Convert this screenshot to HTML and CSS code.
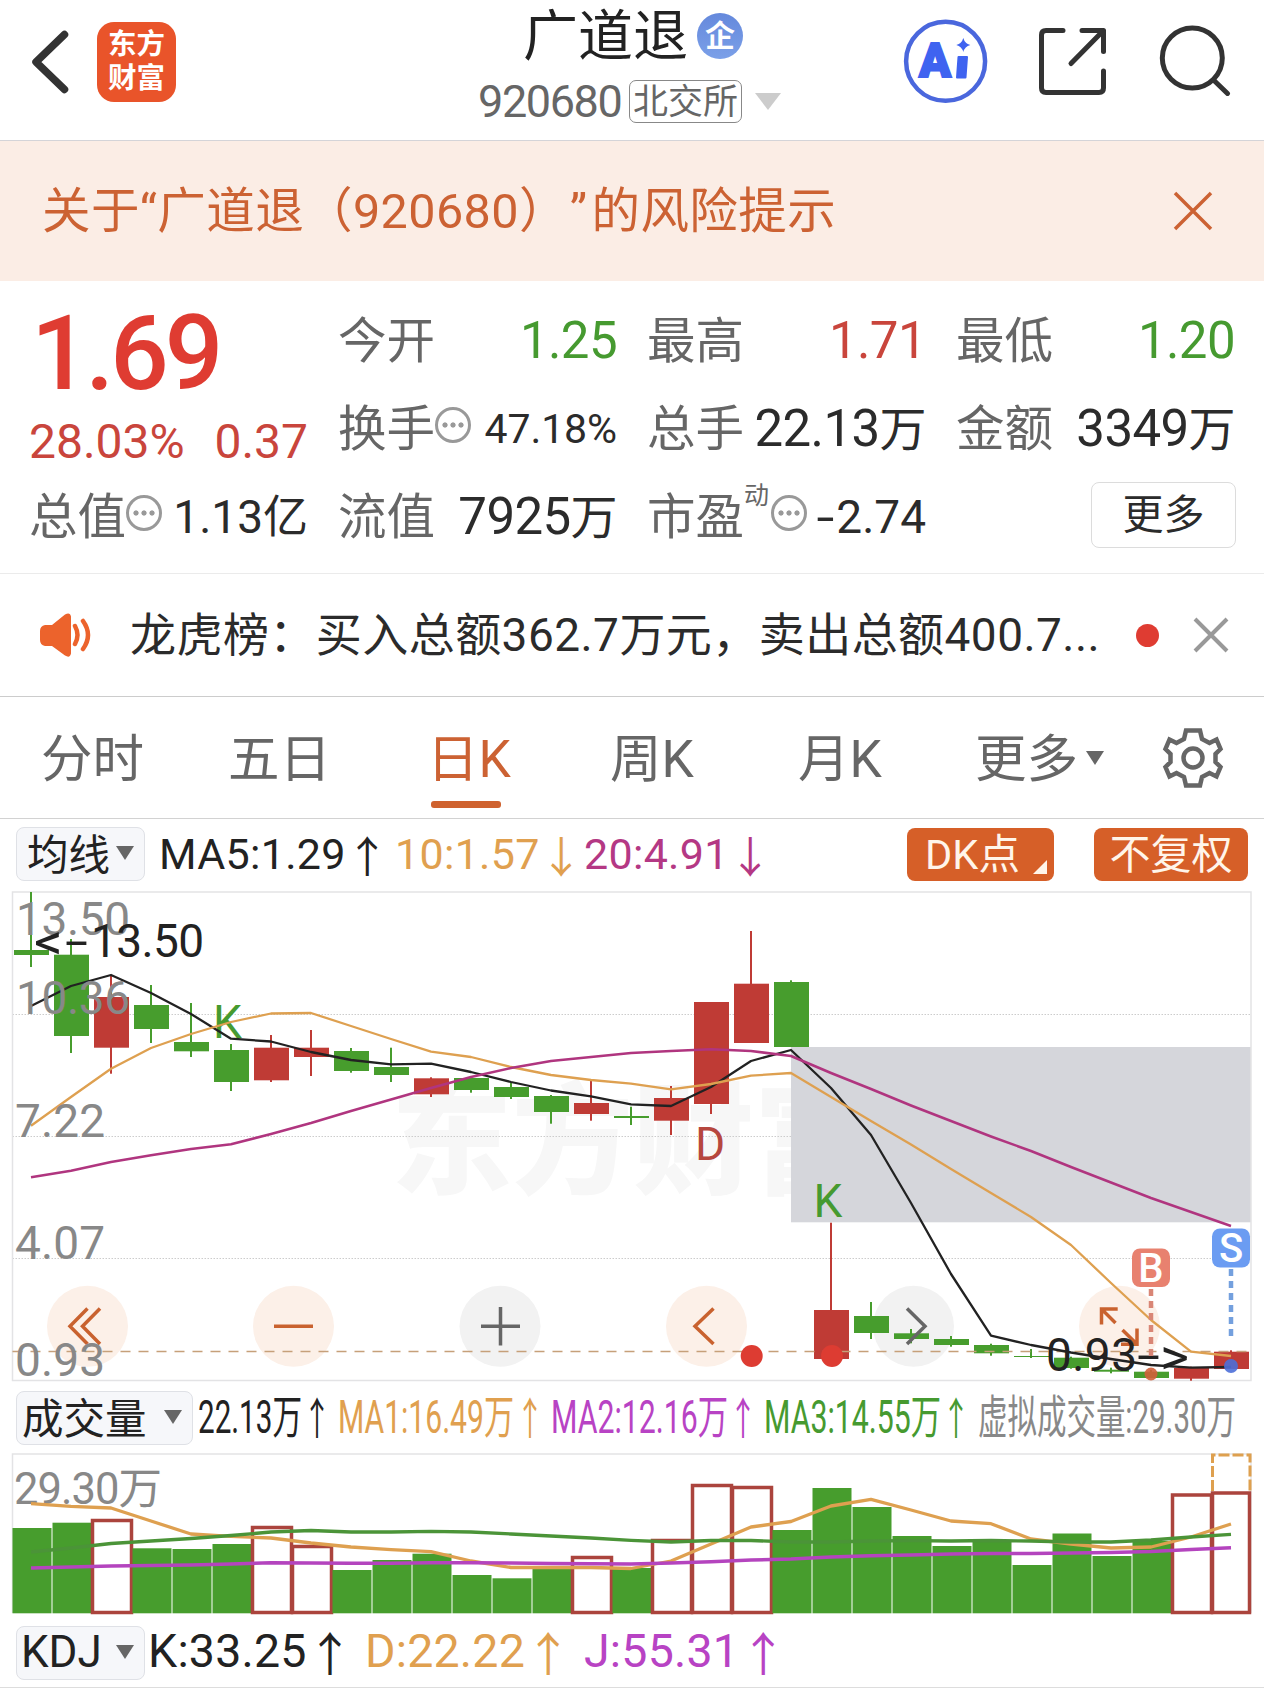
FILE: index.html
```
<!DOCTYPE html>
<html lang="zh-CN">
<head>
    <meta charset="UTF-8">
    <meta name="viewport" content="width=device-width, initial-scale=1.0">
    <title>广道退 920680</title>
    <link rel="stylesheet" href="styles.css">
</head>
<body>

<!-- Top bar -->
<header class="topbar">
    <svg class="back" width="44" height="70" viewBox="28 27 44 70"><path d="M64.500 34.500L36 62l28.500 27.500" /></svg>
    <div class="logo">东方<br>财富</div>
    <div class="stock">
        <div class="stock-name">广道退<span class="badge">企</span></div>
        <div class="stock-code"><span class="code">920680</span><span class="market">北交所</span><i class="tri tri-light"></i></div>
    </div>
    <div class="actions">
        <svg width="86" height="86" viewBox="903 18 86 86">
            <circle cx="945.6" cy="61.300" r="39.500" fill="none" stroke="#4a67dd" stroke-width="4.500" />
            <text x="919" y="76.500" textLength="32" lengthAdjust="spacingAndGlyphs" class="ai-a">A</text>
            <path d="M958.500 57h8.500l-1.500 20.500h-8.500z" fill="#3f63f0" stroke="#3f63f0" stroke-width="2" stroke-linejoin="round" />
            <path d="M963.300 38q1.500 5.500 7 7q-5.500 1.500-7 7q-1.500-5.500-7-7q5.500-1.500 7-7z" fill="#3f63f0" />
        </svg>
        <svg class="share" width="70" height="70" viewBox="1037 26 70 70">
            <path d="M1063 30.500h-17q-4.500 0-4.500 4.500v53q0 4.500 4.500 4.500h53q4.500 0 4.500-4.500v-17M1082 30.500h21.500v21M1102 32L1071 63.500" />
        </svg>
        <svg class="search" width="74" height="74" viewBox="1157 22 74 74">
            <circle cx="1192.300" cy="58" r="30" />
            <path d="M1213.500 80l14 13.500" />
        </svg>
    </div>
</header>

<!-- Risk notice -->
<div class="notice">
    <span class="notice-text">关于“广道退（920680）<q>”</q>的风险提示</span>
    <svg width="40" height="40" viewBox="0 0 40 40"><path d="M2 2L38 38M38 2L2 38" /></svg>
</div>

<!-- Quote panel -->
<section class="quote">
    <div class="price-box">
        <div class="price">1.69</div>
        <div class="change"><span>28.03%</span><span>0.37</span></div>
    </div>
    <div class="cell"><label>今开</label><b class="green">1.25</b></div>
    <div class="cell"><label>最高</label><b class="red">1.71</b></div>
    <div class="cell"><label>最低</label><b class="green">1.20</b></div>
    <div class="cell"><label>换手</label><i class="more-dot"></i><b class="small">47.18%</b></div>
    <div class="cell"><label>总手</label><b>22.13<em>万</em></b></div>
    <div class="cell"><label>金额</label><b>3349<em>万</em></b></div>
    <div class="cell"><label>总值</label><i class="more-dot"></i><b class="mid">1.13<em>亿</em></b></div>
    <div class="cell"><label>流值</label><b>7925<em>万</em></b></div>
    <div class="cell"><label>市盈</label><sup>动</sup><i class="more-dot"></i><b class="mid"><s>-</s>2.74</b></div>
    <div class="cell cell-end"><span class="more-btn">更多</span></div>
</section>

<!-- News ticker -->
<div class="ticker">
    <svg width="54" height="46" viewBox="0 0 54 46">
        <path d="M6 13h7L26 2.500q5-3 6 2v37q-1 5-6 2L13 34H6q-5-1-5-6v-9q0-5 5-6z" fill="#ec632c" />
        <path d="M36 14q5 9 0 18M44 9q10 14 0 28" fill="none" stroke="#ec632c" stroke-width="4.500" stroke-linecap="round" />
    </svg>
    <span class="ticker-text">龙虎榜：买入总额362.7万元，卖出总额400.7...</span>
    <i class="dot"></i>
    <svg class="ticker-close" width="36" height="36" viewBox="0 0 36 36"><path d="M2 2L34 34M34 2L2 34" /></svg>
</div>

<!-- Period tabs -->
<nav class="tabs">
    <span class="tab t1">分时</span>
    <span class="tab t2">五日</span>
    <span class="tab t3 active">日K</span>
    <span class="tab t4">周K</span>
    <span class="tab t5">月K</span>
    <span class="tab t6">更多<i class="tri"></i></span>
    <svg class="gear" width="62" height="62" viewBox="-31 -31 62 62">
        <path d="M-7 -27.500H7L9 -19L16.500 -15L23.500 -18.500L27.500 -9L22.500 -4V4L27.500 9L23.500 18.500L16.500 15L9 19L7 27.500H-7L-9 19L-16.500 15L-23.500 18.500L-27.500 9L-22.500 4V-4L-27.500 -9L-23.500 -18.500L-16.500 -15L-9 -19Z" />
        <circle r="9.500" />
    </svg>
</nav>

<!-- Moving average legend -->
<div class="legend legend-ma">
    <span class="select"><span>均线</span><i class="tri"></i></span>
    <span class="val">MA5:1.29<u>↑</u></span>
    <span class="val orange">10:1.57<u>↓</u></span>
    <span class="val magenta">20:4.91<u>↓</u></span>
    <span class="tag tag-dk">DK点<i class="corner"></i></span>
    <span class="tag">不复权</span>
</div>

<!-- Daily K chart -->
<svg class="chart" width="1264" height="496" viewBox="0 9 1264 496">
    <g class="watermark">
        <text x="391" y="304" textLength="484">东方财富</text>
    </g>
    <rect x="791" y="167" width="460" height="175.300" fill="#d5d6db" />
    <path class="grid" d="M12.500 134.500H1251M12.500 256.500H791M12.500 378.500H1251" />
    <path class="frame" d="M12.500 12V500.500H1251V12Z" />
    <g class="round">
        <circle cx="87.500" cy="446.300" r="40.500" />
        <circle cx="293.500" cy="446.300" r="40.500" />
        <circle class="off" cx="500" cy="446.300" r="40.500" />
        <circle cx="706.500" cy="446.300" r="40.500" />
        <circle class="off" cx="913.500" cy="446.300" r="40.500" />
        <circle cx="1119.500" cy="446.300" r="40.500" />
    </g>
    <g id="candles"></g>
    <path class="last-price" d="M12.500 471.500H1251" />
    <g class="mark">
        <text x="213" y="158.300" class="g">K</text>
        <text x="695" y="280" class="r">D</text>
        <text x="813.500" y="337.300" class="g">K</text>
    </g>
    <g id="maLines"></g>
    <g class="ctrl">
        <path d="M87.500 428.500L70 446.300L87.500 464M100 428.500L82.500 446.300L100 464" />
        <path d="M274 446.300H313" />
        <path class="off" d="M481 446.300H520M500.500 427V465.500" />
        <path d="M713.500 428.500L695 446.300L713.500 464" />
        <path class="off" d="M907 428.500L925 446.300L907 464" />
        <path d="M1117.700 429H1101.500V444.500M1102 429.500L1115.500 443M1121 464.300H1137V448.500M1136.500 463.800L1122.500 450" />
    </g>
    <circle cx="751.700" cy="476" r="11" fill="#dd3c32" />
    <circle cx="832" cy="476" r="11" fill="#dd3c32" />
    <g class="axis">
        <text x="16" y="55" textLength="114">13.50</text>
        <text x="16" y="133.700" textLength="114">10.36</text>
        <text x="15" y="256.500" textLength="90">7.22</text>
        <text x="15" y="378.500" textLength="90">4.07</text>
        <text x="15" y="496" textLength="90">0.93</text>
    </g>
    <g class="peak">
        <text x="34" y="79" textLength="29" lengthAdjust="spacingAndGlyphs" class="wide-sign">&lt;</text>
        <text x="65" y="76.500" textLength="23" lengthAdjust="spacingAndGlyphs">-</text>
        <text x="91" y="76.500" textLength="113">13.50</text>
        <text x="1046" y="490.700" textLength="91">0.93</text>
        <text x="1137" y="490.700" textLength="23" lengthAdjust="spacingAndGlyphs">-</text>
        <text x="1160" y="493.500" textLength="29" lengthAdjust="spacingAndGlyphs" class="wide-sign">&gt;</text>
    </g>
    <!-- buy / sell flags -->
    <path d="M1151 409V476" stroke="#d98676" stroke-width="4.500" stroke-dasharray="7 5" />
    <circle cx="1151" cy="494" r="6.500" fill="#d2603a" opacity=".9" />
    <rect x="1132" y="368.500" width="38" height="38.500" rx="8" fill="#e8816f" />
    <text x="1151" y="402" class="flag">B</text>
    <path d="M1231 389V456" stroke="#74a0de" stroke-width="4.500" stroke-dasharray="7 5" />
    <circle cx="1231" cy="486" r="7" fill="#4c6fd8" opacity=".9" />
    <rect x="1212" y="348.500" width="38" height="39" rx="8" fill="#6b9cf2" />
    <text x="1231" y="382" class="flag">S</text>
</svg>

<!-- Volume legend -->
<div class="legend legend-vol">
    <span class="select wide"><span>成交量</span><i class="tri"></i></span>
    <svg width="1064" height="66" viewBox="194 1385 1064 66">
        <g fill="#222">
            <text x="198" y="1432.700" textLength="104" lengthAdjust="spacingAndGlyphs">22.13万</text>
            <text x="303" y="1435" textLength="28" lengthAdjust="spacingAndGlyphs" class="arrow">↑</text>
        </g>
        <g fill="#e0a04f">
            <text x="338" y="1432.700" textLength="176" lengthAdjust="spacingAndGlyphs">MA1:16.49万</text>
            <text x="516" y="1435" textLength="28" lengthAdjust="spacingAndGlyphs" class="arrow">↑</text>
        </g>
        <g fill="#b843c4">
            <text x="551" y="1432.700" textLength="177" lengthAdjust="spacingAndGlyphs">MA2:12.16万</text>
            <text x="729" y="1435" textLength="28" lengthAdjust="spacingAndGlyphs" class="arrow">↑</text>
        </g>
        <g fill="#469a30">
            <text x="764" y="1432.700" textLength="177" lengthAdjust="spacingAndGlyphs">MA3:14.55万</text>
            <text x="942" y="1435" textLength="28" lengthAdjust="spacingAndGlyphs" class="arrow">↑</text>
        </g>
        <text x="978" y="1432.700" textLength="258" lengthAdjust="spacingAndGlyphs" fill="#888">虚拟成交量:29.30万</text>
    </svg>
</div>

<!-- Volume chart -->
<svg class="chart" width="1264" height="167" viewBox="0 71 1264 167">
    <path class="frame" d="M12.500 233V74H1251V233" />
    <text x="14" y="124" textLength="148" class="vol-max">29.30万</text>
    <g id="bars"></g>
    <path d="M1212.500 111V75H1250V111" fill="none" stroke="#dea04f" stroke-width="3" stroke-dasharray="11 3" />
    <g id="volLines"></g>
</svg>

<!-- KDJ legend -->
<div class="legend legend-kdj">
    <span class="select"><span>KDJ</span><i class="tri"></i></span>
    <span class="val">K:33.25<u>↑</u></span>
    <span class="val orange">D:22.22<u>↑</u></span>
    <span class="val purple">J:55.31<u>↑</u></span>
</div>

<script src="script.js"></script>
</body>
</html>
```
FILE: styles.css
```
* {
    box-sizing: border-box;
}

body {
    margin: 0;
    width: 1264px;
    height: 1688px;
    overflow: hidden;
    background: #fff;
    color: #222;
    font-family: Roboto, "Noto Sans CJK SC", sans-serif;
    text-spacing-trim: space-all;
}

i, em {
    font-style: normal;
}

svg {
    display: block;
    flex: none;
}

.green { color: #469a30; }
.red { color: #c9453c; }
.orange { color: #e0a04f; }
.magenta { color: #b43884; }
.purple { color: #b843c4; }

.tri {
    display: inline-block;
    border: 9px solid transparent;
    border-top: 14px solid #666;
    border-bottom: 0;
}

.tri-light {
    border-width: 17px 13px 0;
    border-top-color: #ccc;
}

/* Top bar */
.topbar {
    display: flex;
    height: 141px;
    padding: 0 33px 0 28px;
    border-bottom: 1px solid #d4d4d8;
}

.back {
    margin-top: 27px;
    fill: none;
    stroke: #333;
    stroke-width: 7.5;
    stroke-linecap: round;
    stroke-linejoin: round;
}

.logo {
    width: 79px;
    height: 80px;
    margin: 22px 0 0 25px;
    padding-top: 6px;
    border-radius: 17px;
    background: #e9542a;
    color: #fff;
    font-size: 28.5px;
    font-weight: 700;
    line-height: 34px;
    text-align: center;
}

.stock {
    width: 310px;
    margin-left: 301px;
}

.stock-name {
    display: flex;
    align-items: center;
    height: 72px;
    padding-left: 46px;
    font-size: 55px;
    line-height: 72px;
}

.badge {
    width: 46px;
    height: 46px;
    margin-left: 9px;
    border-radius: 50%;
    background: linear-gradient(#6589dc, #7ba0e8);
    color: #fff;
    font-size: 30px;
    font-weight: 700;
    line-height: 45px;
    text-align: center;
}

.stock-code {
    display: flex;
    align-items: center;
    height: 58px;
    color: #666;
}

.code {
    width: 152px;
    padding-left: 1px;
    font-size: 45px;
    letter-spacing: -1.4px;
}

.market {
    width: 113px;
    height: 43px;
    margin-right: 13px;
    border: 1.5px solid #888;
    border-radius: 7px;
    font-size: 35px;
    line-height: 43px;
    text-align: center;
}

.actions {
    display: flex;
    align-items: flex-start;
    margin: 18px 0 0 auto;
    gap: 50px;
}

.ai-a {
    fill: #3f63f0;
    stroke: #3f63f0;
    stroke-width: 2;
    font: 900 48px Roboto, sans-serif;
}

.share, .search {
    fill: none;
    stroke: #333;
    stroke-width: 5;
    stroke-linecap: round;
    stroke-linejoin: round;
}

.share { margin-top: 8px; margin-left: -2px; }
.search { margin-top: 4px; }

/* Risk notice */
.notice {
    display: flex;
    align-items: center;
    justify-content: space-between;
    height: 140px;
    padding: 0 51px 0 42px;
    background: #fbede5;
    color: #cc6233;
}

.notice-text {
    margin-top: -9px;
    font-size: 48.5px;
    letter-spacing: .4px;
    white-space: nowrap;
}

.notice q {
    quotes: none;
    margin-left: 2px;
    margin-right: 4px;
}

.notice svg {
    stroke: #cc6233;
    stroke-width: 3.5;
}

/* Quote panel */
.quote {
    display: grid;
    grid-template-columns: repeat(4, 279px);
    grid-template-rows: repeat(3, 88px);
    column-gap: 30px;
    height: 293px;
    padding: 14px 0 0 29px;
    border-bottom: 1.5px solid #ebebeb;
}

.price-box {
    grid-row: span 2;
    color: #c9453c;
}

.price {
    height: 114px;
    padding-left: 2px;
    color: #df3c32;
    font-size: 103px;
    font-weight: 500;
    line-height: 118px;
    letter-spacing: -4px;
}

.change {
    display: flex;
    justify-content: space-between;
    font-size: 48px;
    line-height: 66px;
}

.cell {
    position: relative;
    display: flex;
    align-items: center;
    color: #2b2b2b;
    line-height: 88px;
}

.cell label {
    padding-top: 6px;
    color: #666;
    font-size: 48.500px;
}

.cell b {
    margin-left: auto;
    padding-top: 4px;
    font-size: 51px;
    font-weight: 400;
    letter-spacing: -.6px;
    white-space: nowrap;
}

.cell b em {
    font-size: 47px;
}

.cell .small {
    font-size: 41px;
    letter-spacing: -.1px;
}

.cell .mid {
    font-size: 46px;
    letter-spacing: 0;
}

.cell .mid em {
    font-size: 45px;
}

/* minus sign is wider than the font's hyphen */
.cell s {
    display: inline-block;
    margin-right: 5px;
    text-decoration: none;
    transform: scaleX(1.4);
}

.cell sup {
    align-self: flex-start;
    margin: 10px 2px 0 0;
    color: #666;
    font-size: 25px;
    line-height: 30px;
}

.more-dot {
    width: 36px;
    height: 36px;
    margin-top: -4px;
    border: 3px solid #999;
    border-radius: 50%;
    background:
        radial-gradient(circle at 7px 50%, #999 2.200px, transparent 3px),
        radial-gradient(circle at 15px 50%, #999 2.200px, transparent 3px),
        radial-gradient(circle at 23px 50%, #999 2.200px, transparent 3px);
}

.cell-end {
    justify-content: flex-end;
}

.more-btn {
    width: 145px;
    height: 66px;
    margin: -1px -1px 0 0;
    border: 1.5px solid #dcdcdc;
    border-radius: 8px;
    font-size: 41px;
    line-height: 65px;
    text-align: center;
}

/* News ticker */
.ticker {
    display: flex;
    align-items: center;
    height: 123px;
    padding-left: 39px;
    border-bottom: 1px solid #ccc;
}

.ticker-text {
    width: 990px;
    margin: -8px 0 0 37px;
    color: #2b2b2b;
    font-size: 46px;
    letter-spacing: .45px;
    white-space: nowrap;
}

.dot {
    width: 23px;
    height: 23px;
    margin-left: 16px;
    border-radius: 50%;
    background: #df3c32;
}

.ticker-close {
    margin-left: 34px;
    stroke: #999;
    stroke-width: 4;
}

/* Period tabs */
.tabs {
    display: flex;
    align-items: center;
    height: 122px;
    padding-left: 41px;
    border-bottom: 1px solid #d2d2d2;
    color: #666;
    font-size: 51.5px;
    white-space: nowrap;
}

.tab { margin-top: -6px; }
.t1 { width: 187px; }
.t2 { width: 199px; }
.t3 { width: 183px; }
.t4 { width: 188px; }
.t5 { width: 177px; }
.t6 { width: 187px; }

.tab .tri {
    margin-left: 8px;
    vertical-align: 12px;
}

.active {
    position: relative;
    color: #cc6233;
}

.active::after {
    content: "";
    position: absolute;
    left: 4px;
    bottom: -16px;
    width: 70px;
    height: 7px;
    border-radius: 3px;
    background: #cf622f;
}

.gear {
    fill: none;
    stroke: #666;
    stroke-width: 4.500;
}

/* Indicator legends */
.legend {
    display: flex;
    align-items: center;
    padding-left: 16px;
    white-space: nowrap;
}

.legend-ma { height: 70px; }
.legend-vol { height: 66px; }
.legend-kdj { height: 70px; border-bottom: 1px solid #ddd; }

.select {
    display: flex;
    align-items: center;
    justify-content: space-between;
    width: 129px;
    height: 54px;
    padding: 0 10px 2px;
    border: 1.5px solid #dfe1e6;
    border-radius: 8px;
    background: #f6f7fa;
    font-size: 41.500px;
    line-height: 50px;
}

.select span {
    padding-top: 5px;
}

.wide {
    width: 177px;
    padding-left: 5px;
}

.val {
    display: flex;
    align-items: center;
    font-size: 43px;
    letter-spacing: .3px;
}

.val u {
    width: 43px;
    text-decoration: none;
}

.legend-ma .val {
    width: 188px;
}

.legend-ma .val:nth-child(2) {
    width: 236px;
    margin-left: 14px;
}

.legend-ma .val:nth-child(4) { margin-left: 1px; }
.legend-ma .val u { margin-left: auto; margin-right: 7px; }

.legend-kdj .select { padding-left: 4px; font-size: 44px; }
.legend-kdj .select span { padding-top: 0; }

.legend-kdj .val {
    width: 219px;
    margin-top: -4px;
    font-size: 46.500px;
    letter-spacing: .2px;
}

.legend-kdj .val:nth-child(2) { width: 217px; margin-left: 3px; }
.legend-kdj .val u { margin-left: auto; margin-right: 20px; }

.tag {
    position: relative;
    width: 154px;
    height: 53px;
    border-radius: 8px;
    background: #d65f28;
    color: #fff5ea;
    font-size: 41px;
    line-height: 54px;
    text-align: center;
}

.tag-dk {
    width: 147px;
    margin: 0 40px 0 auto;
    padding-right: 16px;
    font-size: 41.5px;
}

.tag:last-child { margin-right: 16px; }

.corner {
    position: absolute;
    right: 7px;
    bottom: 7px;
    border-left: 14px solid transparent;
    border-bottom: 14px solid #fff5ea;
}

.legend-vol svg {
    margin-left: 1px;
    font-size: 46px;
}

.legend-vol .arrow {
    font-size: 44px;
}

/* Charts */
.chart {
    overflow: visible;
}

.frame {
    fill: none;
    stroke: #e3e3e5;
    stroke-width: 1.5;
}

.grid {
    stroke: #ccc;
    stroke-width: 1;
    stroke-dasharray: 1.5 1.5;
}

.last-price {
    stroke: #c6a07a;
    stroke-width: 1.3;
    stroke-dasharray: 10 8;
}

.watermark text {
    fill: #f7f7f7;
    font-size: 121px;
    font-weight: 900;
}

.round { fill: #fcf0e8; }
.round .off { fill: #f2f2f2; }

.ctrl {
    fill: none;
    stroke: #c9622f;
    stroke-width: 3.500;
}

.ctrl .off { stroke: #666; }

.axis { fill: #888; font-size: 46px; }
.peak { fill: #222; font-size: 46px; }
.wide-sign { font-size: 50px; }
.mark { font-size: 46px; }
.mark .g { fill: #469a30; }
.mark .r { fill: #b6473f; }
.vol-max { fill: #888; font-size: 43.500px; }

.flag {
    fill: #fff;
    font-size: 40px;
    font-weight: 500;
    text-anchor: middle;
}

.line {
    fill: none;
    stroke-linejoin: round;
}
```
FILE: script.js
```
const GREEN = "#479d2d";
const RED = "#bf3b35";
const STEP = 40;
const FIRST = 31;

// [color, high, body top, body bottom, low]
const candles = [
    ["g", 12, 70, 75, 87], ["g", 59, 74.7, 156, 173], ["r", 95.7, 117, 167.7, 193.7],
    ["g", 105, 125, 149, 163], ["g", 123, 162, 171.3, 177], ["g", 164, 170, 202, 211],
    ["r", 155, 167.7, 200.3, 202], ["r", 150, 167.7, 177, 196], ["g", 168, 171, 191, 192.7],
    ["g", 167.7, 187, 195, 202], ["r", 197.3, 198.3, 214.3, 217], ["g", 196.7, 198, 210, 212.7],
    ["g", 203, 207, 217, 219], ["g", 215, 216, 232, 243.7], ["r", 200.7, 223, 234, 240.7],
    ["g", 226.7, 236, 238, 245], ["r", 206, 218, 240.7, 255], ["r", 122, 122, 224, 234],
    ["r", 51, 103.7, 163, 163], ["g", 100.3, 102, 167, 167], ["r", 342.7, 430, 479, 479],
    ["g", 422, 436, 453, 459], ["g", 449, 453.3, 459, 463.3], ["g", 456, 459, 465, 466.7],
    ["g", 463.7, 465, 473.3, 475.7], ["g", 469, 476, 477, 478], ["g", 476.7, 477.7, 488, 488.7],
    ["g", 487.7, 489.7, 491.7, 493.3], ["g", 490, 491.7, 498, 498], ["r", 486.7, 488, 498.7, 500.7],
    ["r", 470.3, 471.7, 489, 489]
];

const ma5 = [126, 106, 95, 113, 134, 158.7, 161.5, 172, 180, 184.3, 183.7, 192, 202, 210.5, 216.3, 224.3, 226, 207, 181, 170, 208, 255, 323, 394, 455.7, 465, 472.5, 479, 485, 487.7, 487];
const ma10 = [245.7, 217, 188.7, 168, 154, 142, 133.5, 133, 146, 159, 171.7, 177, 187, 195, 200, 203.7, 209.3, 204, 195.7, 193, 217, 241, 264.5, 289, 313, 337, 365, 403, 440, 471.7, 476];
const ma20 = [297.3, 290.7, 282, 275.3, 269, 264.3, 254, 243, 231, 219.5, 208, 197, 188, 181, 177, 173, 171, 169.3, 171, 176, 193, 209, 225.5, 241, 256.5, 271, 287, 302.5, 318, 332, 346];

// [color, top]
const volumes = [
    ["g", 148], ["g", 142.7], ["r", 139], ["g", 168.3], ["g", 169], ["g", 164], ["r", 146], ["r", 165],
    ["g", 190], ["g", 180], ["g", 173.7], ["g", 195], ["g", 198.3], ["g", 189], ["r", 176], ["g", 188],
    ["r", 159], ["r", 104], ["r", 106], ["g", 150], ["g", 108], ["g", 127], ["g", 156], ["g", 166],
    ["g", 160], ["g", 185], ["g", 153.5], ["g", 176], ["g", 161], ["r", 113.5], ["r", 111.5]
];

const vol1 = [123.7, 126.3, 128, 141, 154, 156.3, 158, 163, 167, 169.7, 171.7, 181, 187.5, 187.5, 187.5, 188.5, 181, 164, 147, 141.5, 126, 119.3, 130, 141, 143.7, 159, 164, 168, 167, 157, 144];
const vol2 = [188, 187, 186, 185.5, 185, 184, 182.7, 183, 183.3, 183.3, 182.7, 182.7, 183, 183.5, 183.7, 184, 183, 181.7, 180, 179, 177, 175.7, 175, 174, 173.5, 173.5, 173, 172.5, 171.5, 169.5, 167.7];
const vol3 = [172, 168, 163.5, 161, 158.5, 155.5, 152, 150.5, 152, 152, 151.3, 152, 154, 156, 158, 160.3, 162, 160.5, 160.5, 162, 162, 161, 160.7, 161, 160.5, 161, 162, 162, 160, 157, 154.3];

function add(parent, tag, attrs) {
    const el = document.createElementNS("http://www.w3.org/2000/svg", tag);
    for (const key in attrs) el.setAttribute(key, attrs[key]);
    document.getElementById(parent).appendChild(el);
}

function addLine(parent, values, color, width) {
    const points = values.map((y, i) => (FIRST + STEP * i) + "," + y).join(" ");
    add(parent, "polyline", { class: "line", points: points, stroke: color, "stroke-width": width });
}

candles.forEach(([c, high, top, bottom, low], i) => {
    const x = FIRST + STEP * i;
    const color = c === "g" ? GREEN : RED;
    add("candles", "rect", { x: x - 1, y: high, width: 2, height: low - high, fill: color });
    add("candles", "rect", { x: x - 17, y: top, width: 35, height: bottom - top, fill: color });
});

addLine("maLines", ma5, "#222", 2.3);
addLine("maLines", ma10, "#dea050", 2.3);
addLine("maLines", ma20, "#b0357f", 2.5);

volumes.forEach(([c, top], i) => {
    const x = 12.5 + STEP * i;
    if (c === "g") {
        add("bars", "rect", { x: x, y: top, width: 39, height: 233.3 - top, fill: GREEN });
    } else {
        const w = i === volumes.length - 1 ? 37 : 39;
        add("bars", "rect", { x: x, y: top + 1.5, width: w, height: 231 - top, fill: "#fff", stroke: "#ab443d", "stroke-width": 3.5 });
    }
});

addLine("volLines", vol1, "#dea050", 3.3);
addLine("volLines", vol3, "#4b9438", 3.3);
addLine("volLines", vol2, "#b444be", 3.5);
```
